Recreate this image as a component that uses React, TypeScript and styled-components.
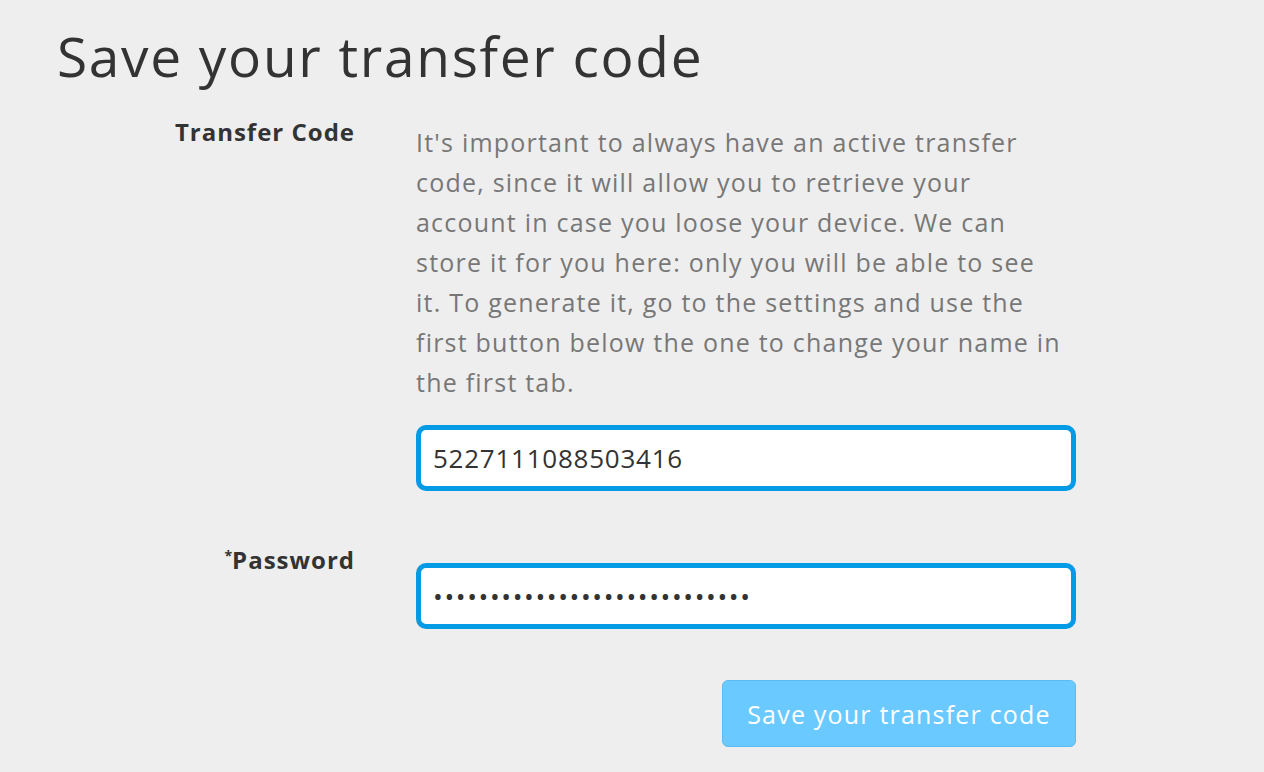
import React from "react";
import styled, { createGlobalStyle } from "styled-components";

const Global = createGlobalStyle`
  html, body { margin: 0; padding: 0; background: #eeeeee; }
  body { font-family: "Open Sans", "Noto Sans", sans-serif; color: #333; }
`;

const Page = styled.div`
  width: 1264px;
  height: 772px;
  background: #eeeeee;
  box-sizing: border-box;
  padding: 20px 0 0 57px;
  overflow: hidden;
`;

const Title = styled.h1`
  margin: 0;
  font-family: "Open Sans", sans-serif;
  font-weight: 400;
  font-size: 55px;
  letter-spacing: 1.7px;
  line-height: 72px;
  color: #333;
`;

const Form = styled.div`
  display: grid;
  grid-template-columns: 298px 660px;
  column-gap: 61px;
  margin-top: 30px;
`;

const Label = styled.div<{ $top: number }>`
  text-align: right;
  font-weight: 700;
  font-size: 24px;
  letter-spacing: 1px;
  line-height: 30px;
  color: #333;
  margin-top: ${(p) => p.$top}px;
`;

const Star = styled.sup`
  font-size: 14px;
  letter-spacing: 0;
  vertical-align: 8px;
  line-height: 0;
`;

const Field = styled.div<{ $gap: number; $after: number }>`
  display: flex;
  flex-direction: column;
  gap: ${(p) => p.$gap}px;
  margin-bottom: ${(p) => p.$after}px;
`;

const Help = styled.p`
  margin: 0;
  font-size: 25px;
  letter-spacing: 1.22px;
  line-height: 40px;
  color: #777;
  white-space: nowrap;
`;

const Input = styled.input<{ $spacing: number }>`
  box-sizing: border-box;
  width: 660px;
  height: 66px;
  border: 5px solid #049be6;
  border-radius: 10px;
  background: #fff;
  padding: 0 12px;
  font-family: "Open Sans", sans-serif;
  font-size: 26px;
  letter-spacing: ${(p) => p.$spacing}px;
  color: #333;
  outline: none;
`;

const Actions = styled.div`
  grid-column: 2;
  display: flex;
  justify-content: flex-end;
`;

const Button = styled.button`
  box-sizing: border-box;
  width: 354px;
  height: 67px;
  padding: 0;
  background: #6ac9ff;
  border: 1px solid #5bbcf3;
  border-radius: 6px;
  color: #fff;
  font-family: "Open Sans", sans-serif;
  font-size: 25px;
  letter-spacing: 1.2px;
  cursor: pointer;
`;

export default function App() {
  return (
    <>
      <Global />
      <Page>
        <Title>Save your transfer code</Title>
        <Form>
          <Label $top={-5}>Transfer Code</Label>
          <Field $gap={23} $after={72}>
            <Help>
              It's important to always have an active transfer
              <br />
              code, since it will allow you to retrieve your
              <br />
              account in case you loose your device. We can
              <br />
              store it for you here: only you will be able to see
              <br />
              it. To generate it, go to the settings and use the
              <br />
              first button below the one to change your name in
              <br />
              the first tab.
            </Help>
            <Input type="text" $spacing={0.75} defaultValue="5227111088503416" />
          </Field>
          <Label $top={-18}>
            <Star>*</Star>Password
          </Label>
          <Field $gap={0} $after={51}>
            <Input type="password" $spacing={1.6} defaultValue="abcdefghijklmnopqrstuvwxyz12" />
          </Field>
          <Actions>
            <Button>Save your transfer code</Button>
          </Actions>
        </Form>
      </Page>
    </>
  );
}
